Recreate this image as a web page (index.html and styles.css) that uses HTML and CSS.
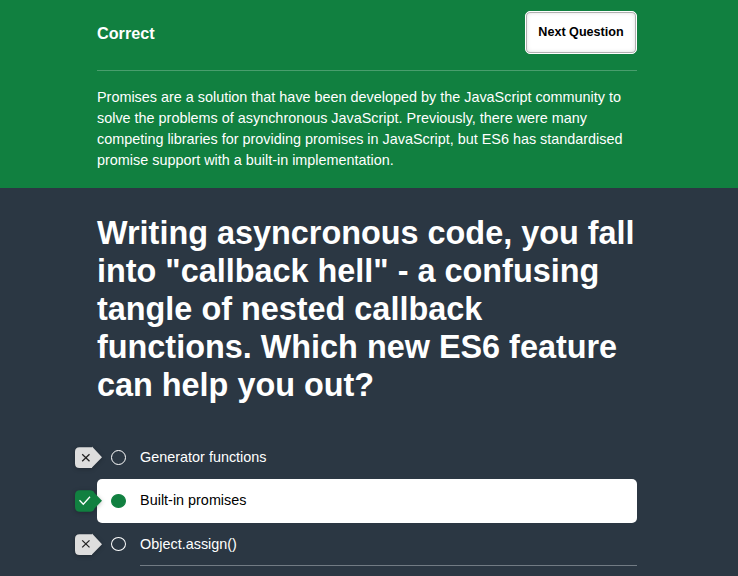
FILE: index.html
```html
<!DOCTYPE html>
<html lang="en">
<head>
<meta charset="utf-8">
<title>Quiz</title>
<link rel="stylesheet" href="styles.css">
</head>
<body>
<header class="feedback">
  <div class="column">
    <div class="feedback-bar">
      <strong class="verdict">Correct</strong>
      <button class="next" type="button">Next Question</button>
    </div>
    <p class="explanation">Promises are a solution that have been developed by the JavaScript community to solve the problems of asynchronous JavaScript. Previously, there were many competing libraries for providing promises in JavaScript, but ES6 has standardised promise support with a built-in implementation.</p>
  </div>
</header>
<main class="column">
  <h1 class="question">Writing asyncronous code, you fall into "callback hell" - a confusing tangle of nested callback functions. Which new ES6 feature can help you out?</h1>
  <ul class="answers">
    <li class="answer">
      <span class="tag"><svg class="mark" viewBox="0 0 27 21"><path class="tag-shape" d="M4.5 0.3H17V-0.6L27 10.2L17 20.4V21H4.5Q0 21 0 16.5V4.8Q0 0.3 4.5 0.3Z"/><path class="glyph" d="M7.2 7.2L14.5 14.2M14.5 7.2L7.2 14.2"/></svg></span>
      <span class="radio"></span><span class="label">Generator functions</span>
    </li>
    <li class="answer selected">
      <span class="tag right"><svg class="mark" viewBox="0 0 27 22"><path class="tag-shape" d="M5 0.3H15Q18.5 0.3 19.5 3L27 10.8L19.5 18.5Q18.5 21.7 15 21.7H5Q0 21.7 0 16.7V5.3Q0 0.3 5 0.3Z"/><path class="glyph" d="M4.5 10.2L8.3 14.3L15 6.8"/></svg></span>
      <span class="radio"></span><span class="label">Built-in promises</span>
    </li>
    <li class="answer last">
      <span class="tag"><svg class="mark" viewBox="0 0 27 21"><path class="tag-shape" d="M4.5 0.3H17V-0.6L27 10.2L17 20.4V21H4.5Q0 21 0 16.5V4.8Q0 0.3 4.5 0.3Z"/><path class="glyph" d="M7.2 6.4L14.5 13.4M14.5 6.4L7.2 13.4"/></svg></span>
      <span class="radio"></span><span class="label ruled">Object.assign()</span>
    </li>
  </ul>
</main>
</body>
</html>
```
FILE: styles.css
```css
* { box-sizing: border-box; }
body {
  margin: 0;
  height: 576px;
  overflow: hidden;
  background: #2b3743;
  color: #fff;
  font-family: "Liberation Sans", Arial, sans-serif;
  font-size: 14.4px;
}
.column { width: 540px; margin-left: 97px; }
.feedback { height: 188px; background: #118040; }
.feedback-bar {
  display: flex;
  justify-content: space-between;
  align-items: flex-start;
  height: 71px;
  padding-top: 11px;
  border-bottom: 1px solid rgba(255,255,255,.24);
}
.verdict { font-size: 16.2px; line-height: 44px; }
.next {
  width: 112px;
  height: 43px;
  padding: 0;
  border: 1px solid #fff;
  border-radius: 5px;
  background: #fff;
  box-shadow: inset 0 0 0 1px #b0b0b0, inset 0 0 5px rgba(0,0,0,.18);
  color: #000;
  font: bold 12.6px/39px "Liberation Sans", Arial, sans-serif;
}
.explanation { margin: 16px 0 0; line-height: 21px; }
.question { margin: 0; padding-top: 26px; font-size: 32.4px; line-height: 38px; }
.answers { margin: 31px 0 0; padding: 0; list-style: none; }
.answer { position: relative; display: flex; align-items: center; height: 44px; padding-left: 14px; }
.selected { border-radius: 5px; background: #fff; color: #000; }
.last { height: 43px; }
.radio { width: 15px; height: 15px; border: 1px solid #fff; border-radius: 50%; }
.selected .radio, .last .radio { height: 14px; }
.last .radio { margin-bottom: 1px; }
.selected .radio { background: #118040; border-color: #118040; }
.label { flex: 1; margin-left: 14.1px; line-height: 44px; }
.selected .label { padding-bottom: 2px; line-height: 42px; }
.ruled { line-height: 42px; border-bottom: 1px solid #727b84; }
.tag {
  position: absolute;
  left: -22px;
  top: 12px;
  filter: drop-shadow(0 1px 2px rgba(0,0,0,.25));
}
.selected .tag, .last .tag { top: 11px; }
.mark { display: block; width: 27px; height: 21px; overflow: visible; }
.right .mark { height: 22px; }
.tag-shape { fill: #ddd; }
.right .tag-shape { fill: #118040; }
.glyph { fill: none; stroke: #222; stroke-width: 1.3; }
.right .glyph { stroke: #fff; }
```
